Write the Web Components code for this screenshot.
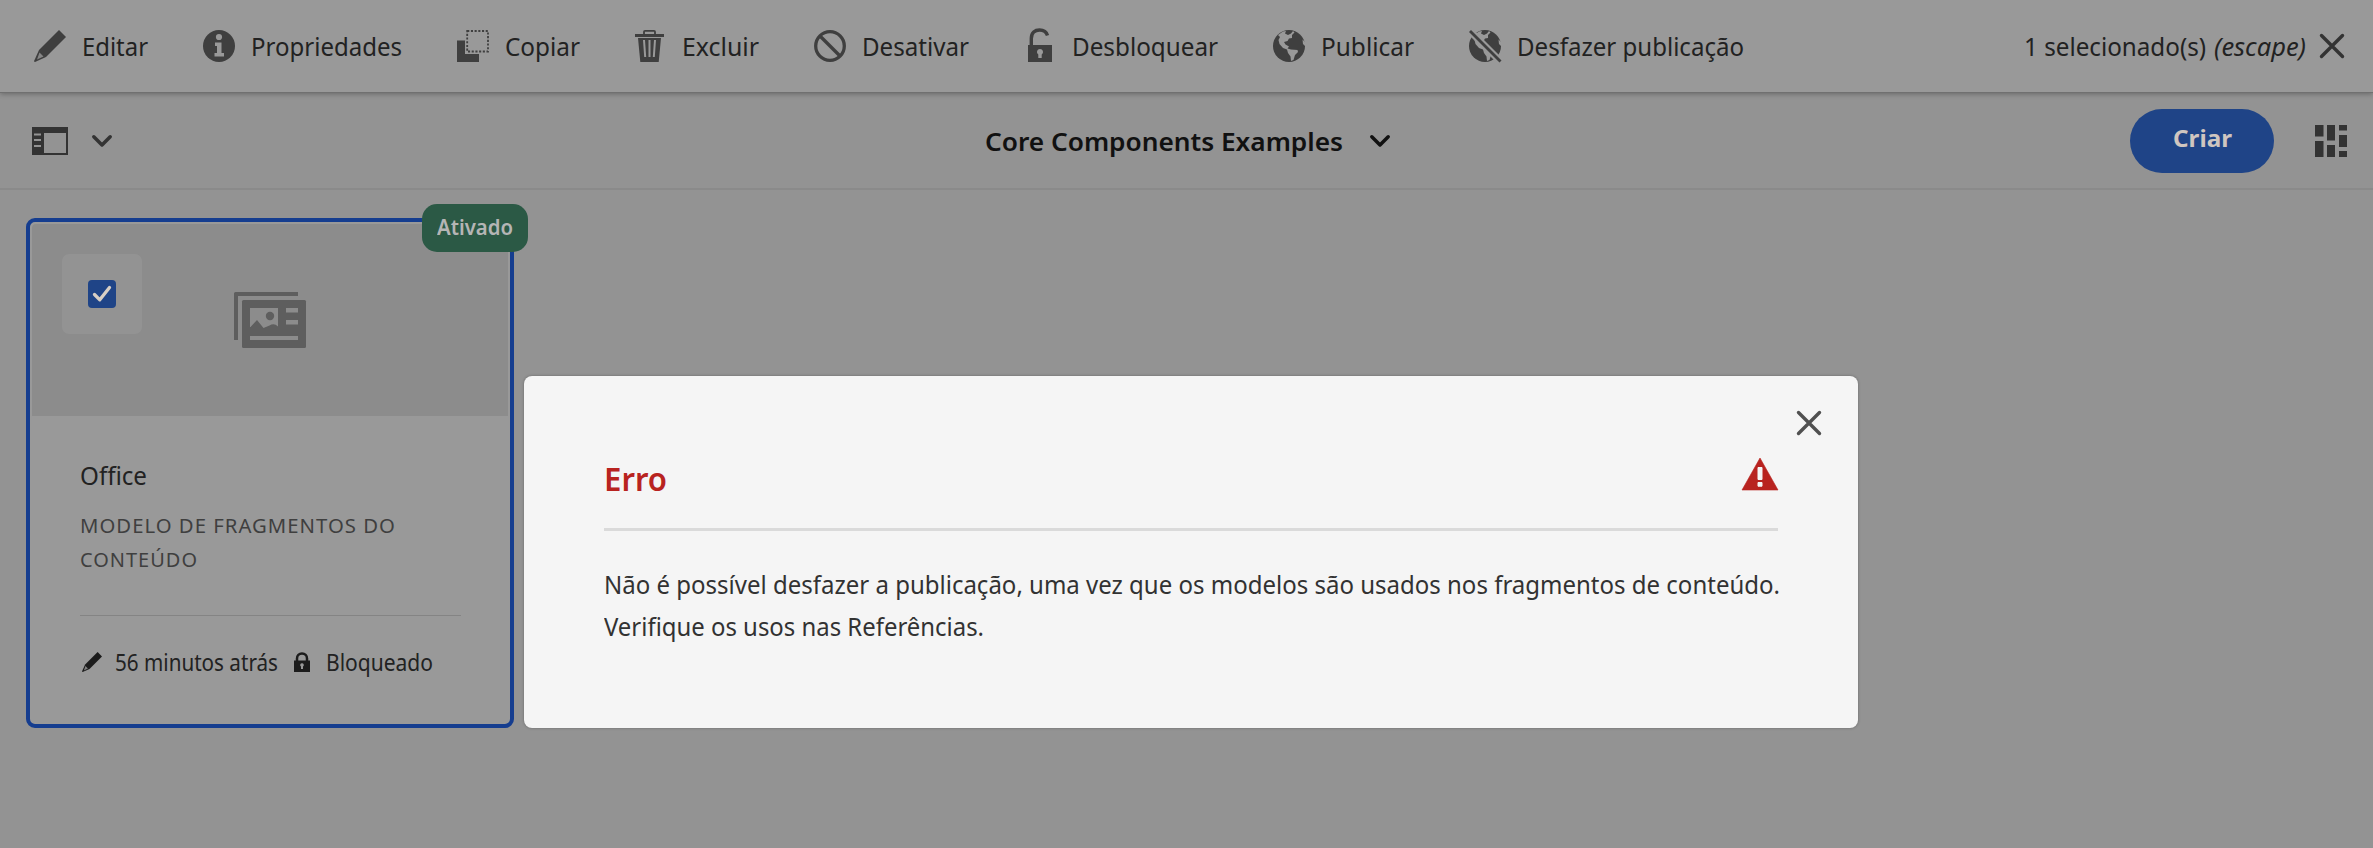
<!DOCTYPE html>
<html lang="pt-BR">
<head>
<meta charset="utf-8">
<title>Core Components Examples</title>
<style>
html,body{margin:0;height:100%;overflow:hidden;background:#939393}
body{font-family:"Noto Sans","Open Sans",sans-serif;color:#222}
</style>
</head>
<body>
<model-console></model-console>
<script>
const define = (name, html, setup) => customElements.define(name, class extends HTMLElement {
  connectedCallback() {
    if (this.shadowRoot) return;
    const root = this.attachShadow({ mode: 'open' });
    const t = document.createElement('template');
    t.innerHTML = typeof html === 'function' ? html(this) : html;
    root.append(t.content.cloneNode(true));
    if (setup) setup(this, root);
  }
});

/* A single line of text condensed to the width given in "w". */
define('fit-text', `<style>
:host{display:block;white-space:nowrap;flex:none}
span{display:inline-block;transform-origin:0 50%}
</style><span><slot></slot></span>`, (el, root) => {
  const w = +el.getAttribute('w'), s = root.querySelector('span');
  const natural = s.getBoundingClientRect().width;
  s.style.transform = `scaleX(${w / natural})`;
  el.style.width = w + 'px';
});

const continents = `<circle cx="16" cy="16" r="16"/><g fill="#999"><path d="M5 5 10 1.500 13 1 12 3.500 15 5 18 3.500 20 1 21.500 2.500 19 5 19 8 16 8.500 14.500 11 11 12 12.500 14.500 16 16.500 14.500 18.500 18 19.500 24.500 20 25 22 22 25 20.500 30 18 31 17.500 26.500 15 23 14 19.500 10 18 6.500 14 5.500 10 7 7Z"/><path d="M29.500 9.500 32 12 32 16 30 14Z"/></g>`;
const icons = {
  pencil: ['0 0 32 32', `<path d="M25 0 32 7 12 27 1 32Q-.3 32 .3 30.500L5 20Z"/><path d="M5.500 22.500 9.500 26.500 3 29.500Z" fill="#999" opacity=".8"/>`],
  info: ['0 0 32 32', `<circle cx="16" cy="16" r="16"/><circle cx="16" cy="7" r="3.100" fill="#999"/><path d="M12 12.500h6.500v10.500H21v3.500H11.500V23H14v-7h-2Z" fill="#999"/>`],
  copy: ['0 0 32 32', `<path d="M0 10.500h8V24h14v8H0Z"/><rect x="10.200" y="1" width="20.800" height="20.500" fill="none" stroke="currentColor" stroke-width="1.800" stroke-dasharray="2.100 1.600"/>`],
  trash: ['0 0 32 32', `<path d="M1 4h29v3H1Z"/><path d="M10 5V1.800q0-1 1-1h9q1 0 1 1V5" fill="none" stroke="currentColor" stroke-width="1.800"/><path d="M4 8h23l-2.300 24H6.300Z"/><path d="M10 10l1.200 17M15.500 10v17M21 10l-1.200 17" stroke="#999" stroke-width="2" fill="none"/>`],
  ban: ['0 0 32 32', `<circle cx="16" cy="16" r="14.300" fill="none" stroke="currentColor" stroke-width="3.300"/><path d="M6.500 6.500 25.500 25.500" stroke="currentColor" stroke-width="3.300"/>`],
  unlock: ['0 0 32 32', `<path d="M4 15h24v17H4Z"/><path d="M7.300 16V8.500C7.300 2.500 11 0 15.500 0c4 0 7 2 8 5.500" fill="none" stroke="currentColor" stroke-width="3.400"/><path d="M16 19a3 3 0 0 1 1.700 5.500V28h-3.400v-3.500A3 3 0 0 1 16 19Z" fill="#999"/>`],
  globe: ['0 0 32 32', continents],
  unglobe: ['0 0 32 32', continents + `<path d="M0 0 32 32" stroke="#999" stroke-width="7"/><path d="M1 1 31.500 31.500" stroke="currentColor" stroke-width="2.800"/>`],
  rail: ['0 0 36 28', `<path d="M0 0h36v28H0ZM12 6v20h22V6Z" fill-rule="evenodd"/><path d="M2 7.500h7M2 13h7M2 19h7" stroke="#939393" stroke-width="2"/>`],
  chevron: ['0 0 20 12', `<path d="M1.800 1.800 10 10 18.200 1.800" fill="none" stroke="currentColor" stroke-width="3.500" stroke-linecap="round" stroke-linejoin="round"/>`],
  close: ['0 0 24 24', `<path d="M1.500 1.500 22.500 22.500M22.500 1.500 1.500 22.500" stroke="currentColor" stroke-width="3.400" stroke-linecap="round"/>`],
  masonry: ['0 0 32 32', `<path d="M0 0h8.500v11.500H0ZM0 16h8.500v16H0ZM12 0h8v15.500h-8ZM12 20h8v12h-8ZM24 0h8v5.500h-8ZM24 10h8v12h-8ZM24 26h8v6h-8Z"/>`],
  lock: ['0 0 16 20', `<path d="M0 8.500h16V20H0Z"/><path d="M3 9V6.500C3 3.500 5 1.500 8 1.500s5 2 5 5V9" fill="none" stroke="currentColor" stroke-width="2.500"/><path d="M8 11.300a1.800 1.800 0 0 1 1 3.300V17H7v-2.400a1.800 1.800 0 0 1 1-3.300Z" fill="#999"/>`],
  fragment: ['0 0 72 56', `<path d="M0 1.500Q0 0 1.500 0H64v4H4v44H0Z"/><rect x="8" y="8" width="64" height="48" rx="1.500"/><g fill="#8c8c8c"><path d="M16 16h28v18.500q-4-4-8.500-1L29.500 36 23 28l-6.500 7-.5 0Z"/><path d="M52 16h12v4.500H52ZM52 28h12v4.500H52ZM16 44h48v4H16Z"/></g><circle cx="36" cy="24" r="4.200"/>`],
  alert: ['0 0 36 32', `<path d="M18 0 36 32H0Z" stroke="#b8231f" stroke-linejoin="round" stroke-width=".6"/><path d="M16 9.500h4v12h-4ZM16 24.500h4v3.700h-4Z" fill="#f5f5f5" stroke="#f5f5f5" stroke-linejoin="round"/>`],
  check: ['0 0 20 18', `<path d="M2.500 9.500 7.800 14.800 17.500 2.500" fill="none" stroke="currentColor" stroke-width="3.300" stroke-linecap="round" stroke-linejoin="round"/>`]
};
define('ui-icon', el => {
  const [box, art] = icons[el.getAttribute('name')];
  const [, , w, h] = box.split(' ');
  return `<style>:host{display:block;flex:none;width:${el.getAttribute('w') || w}px;height:${el.getAttribute('h') || h}px}
svg{display:block;width:100%;height:100%;overflow:visible}</style>
<svg viewBox="${box}" preserveAspectRatio="none" fill="currentColor" aria-hidden="true">${art}</svg>`;
});

define('bar-action', el => `<style>
:host{display:flex;align-items:center;gap:16px;font-size:25px;line-height:36px}
ui-icon{color:#3f3f3f}fit-text{color:#222}
</style><ui-icon name="${el.getAttribute('icon')}"></ui-icon><fit-text w="${el.getAttribute('w')}">${el.getAttribute('label')}</fit-text>`);

define('action-bar', `<style>
:host{display:flex;align-items:center;box-sizing:border-box;height:93px;padding:0 29px 0 34px;background:#999;border-bottom:1px solid #707070;box-shadow:0 1px 5px rgba(0,0,0,.3);position:relative}
.acts{display:flex;gap:54.800px;flex:1}
.sel{display:flex;align-items:center;gap:8px;font-size:25px;line-height:36px;color:#222}
.sel ui-icon{color:#333;margin-left:6px}
</style><div class="acts">
<bar-action icon="pencil" label="Editar" w="66"></bar-action>
<bar-action icon="info" label="Propriedades" w="151"></bar-action>
<bar-action icon="copy" label="Copiar" w="75"></bar-action>
<bar-action icon="trash" label="Excluir" w="77"></bar-action>
<bar-action icon="ban" label="Desativar" w="107"></bar-action>
<bar-action icon="unlock" label="Desbloquear" w="146"></bar-action>
<bar-action icon="globe" label="Publicar" w="93"></bar-action>
<bar-action icon="unglobe" label="Desfazer publicação" w="227"></bar-action>
</div><div class="sel"><fit-text w="182">1 selecionado(s)</fit-text><fit-text w="92"><i>(escape)</i></fit-text><ui-icon name="close"></ui-icon></div>`);

define('title-bar', `<style>
:host{display:grid;grid-template-columns:1fr auto 1fr;align-items:center;box-sizing:border-box;height:97px;padding:1px 26px 0 32px;border-bottom:2px solid #8a8a8a;color:#222}
.left,.mid,.right{display:flex;align-items:center}
.left{gap:24px;color:#333}
.mid{gap:27px;font-size:26px;line-height:38px;font-weight:600;color:#111;margin-right:5px}
.right{justify-content:flex-end;gap:41px;color:#333}
button{all:unset;box-sizing:border-box;width:144px;height:64px;border-radius:32px;background:#1f4487;color:#cfc6c0;font-size:24px;line-height:34px;font-weight:700;display:flex;justify-content:center;align-items:center;padding-bottom:7px}
</style><div class="left"><ui-icon name="rail"></ui-icon><ui-icon name="chevron"></ui-icon></div>
<div class="mid"><fit-text w="358">Core Components Examples</fit-text><ui-icon name="chevron"></ui-icon></div>
<div class="right"><button><fit-text w="59">Criar</fit-text></button><ui-icon name="masonry"></ui-icon></div>`);

define('model-card', `<style>
:host{display:block;position:relative;box-sizing:border-box;width:488px;height:510px;border:4px solid #153d8f;border-radius:9px;background:#999;padding:2px}
.art{height:192px;background:#8c8c8c;border-radius:4px 4px 0 0;display:flex;padding:30px 0 0 30px;box-sizing:border-box}
.tile{width:80px;height:80px;border-radius:7px;background:#939393;display:grid;place-items:center}
.box{width:28px;height:28px;border-radius:4px;background:#1f4487;color:#d8cfc5;display:grid;place-items:center}
.art>ui-icon{color:#5e5e5e;margin:38px 0 0 92px}
.body{padding:41px 47px 0 48px}
.name{font-size:25px;line-height:36px;color:#222}
.type{font-size:20px;line-height:33.700px;letter-spacing:1px;color:#3f3f3f;margin-top:16px;border-bottom:1px solid #848484;box-sizing:border-box;height:107px}
.meta{display:flex;align-items:center;font-size:23px;line-height:34px;margin-top:29px;color:#222}
.meta ui-icon{color:#1c1c1c}
.badge{position:absolute;right:-18px;top:-18px;width:106px;height:48px;border-radius:15px;background:#2b5945;color:#b5b5b5;font-size:21px;line-height:47px;font-weight:600;display:flex;justify-content:center}
</style><div class="art"><div class="tile"><div class="box"><ui-icon name="check"></ui-icon></div></div><ui-icon name="fragment"></ui-icon></div>
<div class="body"><div class="name"><fit-text w="67">Office</fit-text></div>
<div class="type"><fit-text w="316">MODELO DE FRAGMENTOS DO</fit-text><fit-text w="118">CONTEÚDO</fit-text></div>
<div class="meta"><ui-icon name="pencil" w="20" h="20" style="margin-left:2px"></ui-icon><fit-text w="163" style="margin-left:13px">56 minutos atrás</fit-text><ui-icon name="lock" style="margin-left:16px"></ui-icon><fit-text w="107" style="margin-left:16px">Bloqueado</fit-text></div></div>
<div class="badge"><fit-text w="76">Ativado</fit-text></div>`);

define('error-dialog', `<style>
:host{display:block;box-sizing:border-box;width:1334px;height:352px;border-radius:8px;background:#f5f5f5;padding:35px 37px 0 80px;box-shadow:0 0 3px rgba(0,0,0,.3)}
.x{display:flex;justify-content:flex-end;color:#505050}
header{display:flex;justify-content:space-between;margin:19px 43px 0 0;height:77px;box-sizing:border-box;border-bottom:3px solid #dadada;color:#b8231f;font-size:33px;line-height:50px;font-weight:600}
header ui-icon{margin-top:4px}
.msg{font-size:25px;line-height:42px;color:#323232;margin-top:32px}
</style><div class="x"><ui-icon name="close"></ui-icon></div>
<header><fit-text w="63">Erro</fit-text><ui-icon name="alert"></ui-icon></header>
<div class="msg"><fit-text w="1176">Não é possível desfazer a publicação, uma vez que os modelos são usados nos fragmentos de conteúdo.</fit-text><fit-text w="380">Verifique os usos nas Referências.</fit-text></div>`);

define('model-console', `<style>
:host{display:block;height:848px;background:#939393;position:relative;overflow:hidden}
model-card{margin:28px 0 0 26px}
error-dialog{position:absolute;left:524px;top:376px}
</style><action-bar></action-bar><title-bar></title-bar><model-card></model-card><error-dialog></error-dialog>`);
</script>
</body>
</html>
